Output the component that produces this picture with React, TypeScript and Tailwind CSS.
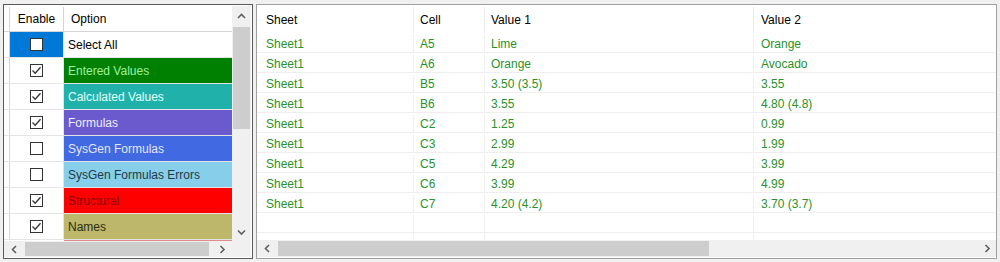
import React from 'react';

const options = [
  { label: 'Select All', checked: false, bg: 'bg-white', fg: 'text-black', selected: true },
  { label: 'Entered Values', checked: true, bg: 'bg-[#008000]', fg: 'text-[#a0f0a0]' },
  { label: 'Calculated Values', checked: true, bg: 'bg-[#20b2aa]', fg: 'text-[#e0ffff]' },
  { label: 'Formulas', checked: true, bg: 'bg-[#6a5acd]', fg: 'text-[#eeeeff]' },
  { label: 'SysGen Formulas', checked: false, bg: 'bg-[#4169e1]', fg: 'text-[#e6e6fa]' },
  { label: 'SysGen Formulas Errors', checked: false, bg: 'bg-[#87ceeb]', fg: 'text-[#1f3a44]' },
  { label: 'Structural', checked: true, bg: 'bg-[#ff0000]', fg: 'text-[#8b0000]' },
  { label: 'Names', checked: true, bg: 'bg-[#bdb76b]', fg: 'text-[#2e2e10]' },
];

const rows = [
  ['Sheet1', 'A5', 'Lime', 'Orange'],
  ['Sheet1', 'A6', 'Orange', 'Avocado'],
  ['Sheet1', 'B5', '3.50 (3.5)', '3.55'],
  ['Sheet1', 'B6', '3.55', '4.80 (4.8)'],
  ['Sheet1', 'C2', '1.25', '0.99'],
  ['Sheet1', 'C3', '2.99', '1.99'],
  ['Sheet1', 'C5', '4.29', '3.99'],
  ['Sheet1', 'C6', '3.99', '4.99'],
  ['Sheet1', 'C7', '4.20 (4.2)', '3.70 (3.7)'],
];

function Chevron({ dir }: { dir: 'up' | 'down' | 'left' | 'right' }) {
  const pts = {
    up: '1,6 4.5,2.5 8,6',
    down: '1,2.5 4.5,6 8,2.5',
    left: '6,1 2.5,4.5 6,8',
    right: '2.5,1 6,4.5 2.5,8',
  }[dir];
  return (
    <svg width="9" height="9" viewBox="0 0 9 9">
      <polyline points={pts} fill="none" stroke="#606060" strokeWidth="1.6" />
    </svg>
  );
}

function CheckBox({ checked }: { checked: boolean }) {
  return (
    <div className="w-[13px] h-[13px] border border-[#333333] bg-white flex items-center justify-center">
      {checked && (
        <svg width="11" height="11" viewBox="0 0 11 11">
          <polyline points="1.5,5.5 4.2,8.2 9.5,2.2" fill="none" stroke="#333333" strokeWidth="1.3" />
        </svg>
      )}
    </div>
  );
}

export default function App() {
  return (
    <div className="w-[1000px] h-[262px] bg-[#f0f0f0] flex gap-[3px] pl-[3px] pt-[4px] font-['Liberation_Sans',Arial,sans-serif] text-[12px] leading-none">
      {/* Left: option list */}
      <div className="w-[250px] h-[255px] border border-[#5a5a5a] bg-white flex flex-col pt-[1px] pb-[1px]">
        <div className="flex h-[235px]">
          <div className="w-[228px] flex flex-col">
            <div className="flex h-[26px] border-b border-[#d4d4d4] shrink-0 pt-[1px]">
              <div className="w-[6px] border-r border-[#d4d4d4]" />
              <div className="w-[54px] border-r border-[#d4d4d4] flex items-center justify-center text-black">Enable</div>
              <div className="flex-1 flex items-center pl-[7px] text-black">Option</div>
            </div>
            {options.map((o) => (
              <div key={o.label} className="flex h-[26px] border-b border-[#e4e4e4] shrink-0">
                <div className="w-[6px] border-r border-[#d4d4d4]" />
                <div className={`w-[54px] border-r border-[#e4e4e4] flex items-center justify-center ${o.selected ? 'bg-[#0078d7]' : 'bg-white'}`}>
                  <CheckBox checked={o.checked} />
                </div>
                <div className={`flex-1 flex items-center pl-[4px] pt-[1px] ${o.bg} ${o.fg}`}>{o.label}</div>
              </div>
            ))}
            <div className="h-[1px] flex">
              <div className="w-[60px]" />
              <div className="flex-1 bg-[#e08a8a]" />
            </div>
          </div>
          <div className="w-[19px] bg-[#f0f0f0] flex flex-col">
            <div className="h-[21px] flex items-center justify-center"><Chevron dir="up" /></div>
            <div className="h-[102px] mx-[1px] bg-[#cdcdcd]" />
            <div className="flex-1" />
            <div className="h-[18px] flex items-center justify-center"><Chevron dir="down" /></div>
          </div>
          <div className="w-[1px]" />
        </div>
        <div className="flex h-[17px]">
          <div className="w-[228px] bg-[#f0f0f0] flex">
            <div className="w-[20px] flex items-center justify-center"><Chevron dir="left" /></div>
            <div className="w-[184px] ml-[1px] bg-[#cdcdcd] my-[1px]" />
            <div className="flex-1" />
            <div className="w-[19px] flex items-center justify-center"><Chevron dir="right" /></div>
          </div>
          <div className="w-[19px] bg-[#f0f0f0]" />
        </div>
      </div>

      {/* Right: results grid */}
      <div className="w-[741px] h-[255px] border border-[#a0a0a0] bg-white flex flex-col pb-[1px]">
        <div className="flex h-[28px] shrink-0 text-black pt-[2px]">
          <div className="w-[157px] border-r border-[#ececec] flex items-center pl-[9px]">Sheet</div>
          <div className="w-[71px] border-r border-[#ececec] flex items-center pl-[6px]">Cell</div>
          <div className="w-[269px] border-r border-[#ececec] flex items-center pl-[6px]">Value 1</div>
          <div className="flex-1 flex items-center pl-[7px]">Value 2</div>
        </div>
        {[...rows, ['', '', '', '']].map((r, i) => (
          <div key={i} className="flex h-[20px] shrink-0 border-b border-[#eeeeee] text-[#2a922a] pt-[2px]">
            <div className="w-[157px] border-r border-[#f0f0f0] flex items-center pl-[9px]">{r[0]}</div>
            <div className="w-[71px] border-r border-[#f0f0f0] flex items-center pl-[6px]">{r[1]}</div>
            <div className="w-[269px] border-r border-[#f0f0f0] flex items-center pl-[6px]">{r[2]}</div>
            <div className="flex-1 flex items-center pl-[7px]">{r[3]}</div>
          </div>
        ))}
        <div className="flex flex-1">
          <div className="w-[157px] border-r border-[#f0f0f0]" />
          <div className="w-[71px] border-r border-[#f0f0f0]" />
          <div className="w-[269px] border-r border-[#f0f0f0]" />
          <div className="flex-1" />
        </div>
        <div className="flex h-[17px] shrink-0 bg-[#f0f0f0]">
          <div className="w-[21px] flex items-center justify-center"><Chevron dir="left" /></div>
          <div className="w-[431px] bg-[#cdcdcd] my-[1px]" />
          <div className="flex-1" />
          <div className="w-[18px] flex items-center justify-center"><Chevron dir="right" /></div>
        </div>
      </div>
    </div>
  );
}
